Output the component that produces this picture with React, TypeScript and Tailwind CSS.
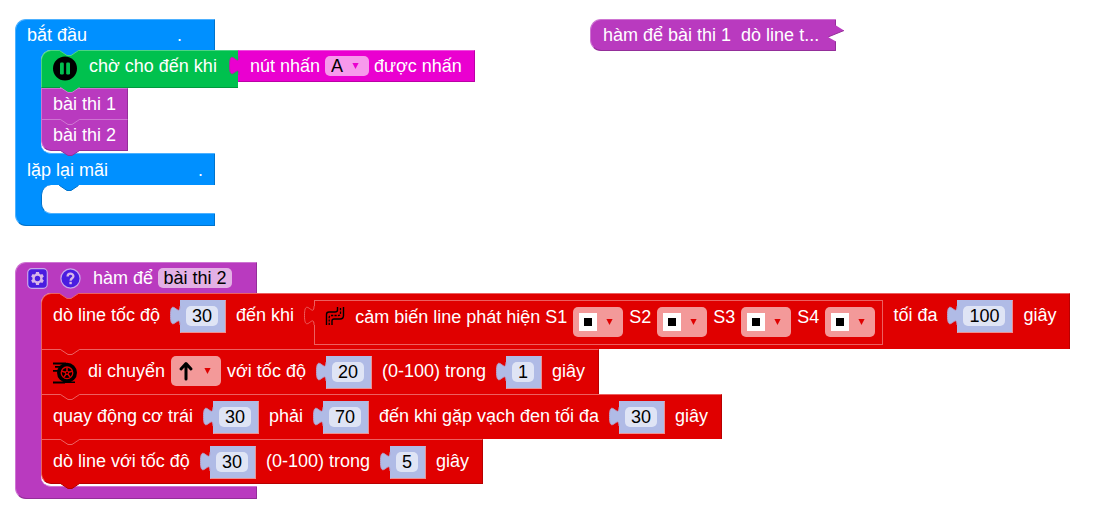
import { useState, type ReactNode } from "react";

function Label({ children, className = "" }: { children: ReactNode; className?: string }) {
  return <span className={`whitespace-pre leading-[20px] ${className}`}>{children}</span>;
}

/* Lower connector of a statement block; it hangs over the block that follows. */
function Connector({ fill, edge, className = "left-[18px]" }: { fill: string; edge: string; className?: string }) {
  return (
    <svg className={`pointer-events-none absolute top-full z-10 ${className}`} width="20" height="7" viewBox="0 0 20 7" aria-hidden="true">
      <path d="M0 0H19.5V.5L12 5.5H8L.5 .5H0Z" fill={fill} />
      <path d="M0 .5H.5L8 5.500H12L19.500 .5" fill="none" stroke={edge} strokeWidth="1" />
    </svg>
  );
}

/* Jigsaw tab on the left of a value block. */
function Plug({ fill, edge }: { fill: string; edge: string }) {
  return (
    <svg className="z-10 -mr-px shrink-0" width="11" height="30" viewBox="0 0 11 30" aria-hidden="true">
      <path d="M11 6.200H10C10 18.700 .5 -3.800 .5 15.500S10 12.400 10 24.900H11Z" fill={fill} />
      <path d="M10 6.200C10 18.700 .5 -3.800 .5 15.500S10 12.400 10 24.900" fill="none" stroke={edge} strokeWidth="1" />
    </svg>
  );
}

function NumberValue({ value, label }: { value: string; label: string }) {
  const [text, setText] = useState(value);
  const width = value.length === 1 ? "w-[22px]" : value.length === 2 ? "w-[32px]" : "w-[42px]";
  return (
    <div className="flex items-start">
      <Plug fill="#b0bbe6" edge="#b5a3cc" />
      <div className="flex h-[33px] border border-t-[#b0bbe6] border-r-[#ee9090] border-b-[#ee9090] border-l-[#b0bbe6] bg-[#b0bbe6] pt-[5px] pr-[7px] pl-[5px]">
        <input
          aria-label={label}
          value={text}
          onChange={(e) => setText(e.target.value)}
          className={`h-[20px] rounded-[5px] bg-[#dfe4f5] p-0 text-center leading-[20px] text-black outline-none ${width}`}
        />
      </div>
    </div>
  );
}

function Caret({ fill, className }: { fill: string; className: string }) {
  return (
    <svg className={`pointer-events-none [grid-area:1/1] ${className}`} width="7" height="6" viewBox="0 0 7 6" aria-hidden="true">
      <path d="M.4 0H6.600L3.500 6Z" fill={fill} />
    </svg>
  );
}

function PictureSelect({ label, options, children }: { label: string; options: string[]; children: ReactNode }) {
  return (
    <div className="grid items-center">
      <select aria-label={label} className="h-[30px] w-[50px] appearance-none rounded-[5px] bg-[#f39999] p-0 text-transparent outline-none [grid-area:1/1]">
        {options.map((o) => (
          <option key={o}>{o}</option>
        ))}
      </select>
      {children}
      <Caret fill="#e00000" className="mr-[10px] justify-self-end" />
    </div>
  );
}

function SensorSelect({ name }: { name: string }) {
  return (
    <PictureSelect label={name} options={["■", "□"]}>
      <svg className="pointer-events-none ml-[6px] [grid-area:1/1]" width="18" height="18" viewBox="0 0 18 18" aria-hidden="true">
        <path d="M0 0H18V18H0Z" fill="#fff" />
        <path d="M5 5H13V13H5Z" fill="#000" />
      </svg>
    </PictureSelect>
  );
}

function RedRow({ children, className = "", last = false }: { children: ReactNode; className?: string; last?: boolean }) {
  return (
    <div className={`relative flex w-max items-start gap-[10px] border border-t-[#ec6060] border-r-[#b80000] border-b-[#b80000] border-l-[#ec6060] bg-[#e00000] pt-[6px] pr-[13px] pl-[11px] ${className}`}>
      {children}
      <Connector fill="#e00000" edge={last ? "#b80000" : "#ec6060"} />
    </div>
  );
}

function PauseIcon() {
  return (
    <svg width="24" height="25" viewBox="0 0 24 25" aria-hidden="true">
      <circle cx="12" cy="12.500" r="12" fill="#000" />
      <rect x="7" y="6.500" width="3.800" height="12" rx="1.200" fill="#00c14e" />
      <rect x="13.200" y="6.500" width="3.800" height="12" rx="1.200" fill="#00c14e" />
    </svg>
  );
}

function WheelIcon() {
  return (
    <svg className="mt-[5px] mr-[1px]" width="24" height="24" viewBox="0 0 24 24" aria-hidden="true">
      <path d="M0 1.500H13V3.500H0ZM2 5H9V6.800H2ZM0 9H6V10.800H0ZM0 20.500H12V22.500H0Z" fill="#000" />
      <circle cx="14" cy="11.800" r="10" fill="#000" />
      <circle cx="14" cy="11.800" r="5.800" fill="none" stroke="#e00000" strokeWidth="1.300" />
      <path d="M14 11.800V6.500M14 11.800L19 10.200M14 11.800L17.100 16.100M14 11.800L10.900 16.100M14 11.800L9 10.200" stroke="#e00000" strokeWidth="1.500" />
      <circle cx="14" cy="11.800" r="2.100" fill="#e00000" />
      <circle cx="14" cy="11.800" r="1" fill="#000" />
      <path d="M10 20.500H22V22H10Z" fill="#000" />
    </svg>
  );
}

function LineIcon() {
  return (
    <svg className="-mt-px" width="20" height="20" viewBox="0 0 20 20" fill="none" stroke="#000" aria-hidden="true">
      <path d="M1.500 19V8.500Q1.500 6 4 6H10Q12.500 6 12.500 4V1M7 19V15Q7 13 9 13H15Q18.500 13 18.500 9.500V1" strokeWidth="1.400" />
      <path d="M4.200 19V11.500Q4.200 9.500 6.200 9.500H13Q15.500 9.500 15.500 7V1" strokeWidth="1.300" strokeDasharray="2.200 1.200" />
    </svg>
  );
}

function StartBlock() {
  return (
    <section className="absolute top-[19px] left-[15px] w-max">
      <div className="relative flex h-[31px] w-[200px] items-center rounded-tl-[11px] border-t border-r border-l border-t-[#4db1ff] border-r-[#0073cc] border-l-[#4db1ff] bg-[#0090ff] pl-[11px]">
        <Label>{"bắt đầu" + " ".repeat(18) + "."}</Label>
        <Connector className="left-[43px]" fill="#0090ff" edge="#4dd484" />
      </div>
      <div className="border-l border-[#4db1ff] bg-[linear-gradient(#0090ff,#0090ff)] bg-[length:40px_100%] bg-no-repeat pl-[25px]">
        <div className="w-[174px] rounded-l-[10px] border-b border-b-[#4db1ff] bg-white pb-[2px]">
          <div className="flex w-max items-start">
            <div className="relative flex h-[38px] items-start gap-[12px] rounded-tl-[10px] border-t border-b border-l border-t-[#4dd484] border-b-[#009a3e] border-l-[#4dd484] bg-[#00c14e] pt-[5px] pl-[11px]">
              <PauseIcon />
              <Label>chờ cho đến khi</Label>
              <div className="-mt-[6px] -mr-px">
                <Plug fill="#ea00d0" edge="#a8309a" />
              </div>
              <Connector fill="#00c14e" edge="#ce75d2" />
            </div>
            <div className="flex h-[32px] items-center gap-[5px] border border-t-[#f04ddf] border-r-[#bb00a6] border-b-[#bb00a6] border-l-[#ea00d0] bg-[#ea00d0] pr-[12px] pl-[11px]">
              <Label>nút nhấn</Label>
              <div className="grid items-center">
                <select aria-label="nút nhấn" className="h-[20px] w-[44px] appearance-none rounded-[5px] bg-[#f799ec] p-0 pl-[6px] leading-[20px] text-black outline-none [grid-area:1/1]">
                  <option>A</option>
                  <option>B</option>
                </select>
                <Caret fill="#ea00d0" className="mr-[10px] justify-self-end" />
              </div>
              <Label>được nhấn</Label>
            </div>
          </div>
          <div className="relative flex h-[31px] w-[87px] items-center border-t border-r border-l border-t-[#ce75d2] border-r-[#942e99] border-l-[#ce75d2] bg-[#b93abf] pl-[11px]">
            <Label>bài thi 1</Label>
            <Connector fill="#b93abf" edge="#ce75d2" />
          </div>
          <div className="relative flex h-[32px] w-[87px] items-center rounded-bl-[10px] border border-t-[#ce75d2] border-r-[#942e99] border-b-[#942e99] border-l-[#ce75d2] bg-[#b93abf] pl-[11px]">
            <Label>bài thi 2</Label>
            <Connector fill="#b93abf" edge="#942e99" />
          </div>
        </div>
      </div>
      <div className="relative flex h-[31px] w-[200px] items-center border-r border-l border-r-[#0073cc] border-l-[#4db1ff] bg-[#0090ff] pl-[11px]">
        <Label>{"lặp lại mãi" + " ".repeat(18) + "."}</Label>
        <Connector className="left-[43px]" fill="#0090ff" edge="#0073cc" />
      </div>
      <div className="w-[200px] border-l border-[#4db1ff] bg-[linear-gradient(#0090ff,#0090ff)] bg-[length:40px_100%] bg-no-repeat pl-[25px]">
        <div className="h-[29px] rounded-l-[10px] border-b border-l border-b-[#4db1ff] border-l-[#0073cc] bg-white" />
      </div>
      <div className="h-[12px] w-[200px] rounded-bl-[11px] border-r border-b border-l border-r-[#0073cc] border-b-[#0073cc] border-l-[#4db1ff] bg-[#0090ff]" />
    </section>
  );
}

function CollapsedBlock() {
  return (
    <section className="absolute top-[19px] left-[590px] flex">
      <div className="flex h-[32px] items-center rounded-l-[11px] border-y border-l border-t-[#ce75d2] border-b-[#942e99] border-l-[#ce75d2] bg-[#b93abf] pr-[9px] pl-[12px]">
        <Label>hàm để bài thi 1  dò line t...</Label>
      </div>
      <svg width="17" height="32" viewBox="0 0 17 32" aria-hidden="true">
        <path d="M0 0H8V6.500L16 11.500L0 18L8 22.500V32H0Z" fill="#b93abf" />
        <path d="M0 .5H8" stroke="#ce75d2" />
        <path d="M7.500 1V6.500M16 11.500L0 18M7.500 22.500V31.500H0" fill="none" stroke="#942e99" />
      </svg>
    </section>
  );
}

function FunctionBlock() {
  const [name, setName] = useState("bài thi 2");
  return (
    <section className="absolute top-[262px] left-[15px] w-max">
      <div className="relative flex h-[31px] w-[242px] items-center rounded-tl-[11px] border-t border-r border-l border-t-[#ce75d2] border-r-[#942e99] border-l-[#ce75d2] bg-[#b93abf] pl-[11px]">
        <button type="button" aria-label="Tùy chỉnh" className="mr-[12px]">
          <svg className="block" width="21" height="21" viewBox="0 0 21 21" aria-hidden="true">
            <rect x=".7" y=".7" width="19.600" height="19.600" rx="4" fill="#4a1ce0" stroke="#c9a5ea" strokeWidth="1.200" />
            <g fill="#d9b5e8">
              <circle cx="10.500" cy="10.500" r="5" />
              <path d="M9 4H12L12.500 7H8.500ZM9 17H12L12.500 14H8.500Z" />
              <path d="M9 4H12L12.500 7H8.500ZM9 17H12L12.500 14H8.500Z" transform="rotate(60 10.500 10.500)" />
              <path d="M9 4H12L12.500 7H8.500ZM9 17H12L12.500 14H8.500Z" transform="rotate(120 10.500 10.500)" />
            </g>
            <circle cx="10.500" cy="10.500" r="2.700" fill="#4a1ce0" />
          </svg>
        </button>
        <button type="button" aria-label="Trợ giúp" className="mr-[12px]">
          <svg className="block" width="21" height="21" viewBox="0 0 21 21" aria-hidden="true">
            <circle cx="10.500" cy="10.500" r="9.600" fill="#4a1ce0" stroke="#c9a5ea" strokeWidth="1.200" />
            <path d="M7.600 8.500C7.600 4.800 13.400 4.800 13.400 8.200C13.400 10.300 10.600 10.200 10.600 12.700" fill="none" stroke="#d9b5e8" strokeWidth="2.300" />
            <path d="M9.400 13.800H11.800V16.200H9.400Z" fill="#d9b5e8" />
          </svg>
        </button>
        <Label className="mr-[5px]">hàm để</Label>
        <input
          aria-label="hàm để"
          value={name}
          onChange={(e) => setName(e.target.value)}
          className="h-[20px] w-[74px] rounded-[5px] bg-[#e3b0e5] p-0 text-center leading-[20px] text-black outline-none"
        />
        <Connector className="left-[43px]" fill="#b93abf" edge="#ec6060" />
      </div>
      <div className="border-l border-[#ce75d2] bg-[linear-gradient(#b93abf,#b93abf)] bg-[length:40px_100%] bg-no-repeat pl-[25px]">
        <div className="w-[216px] rounded-l-[10px] border-b border-b-[#ce75d2] bg-white pb-[2px]">
          <RedRow className="h-[56px] rounded-tl-[10px] border-b-0">
            <Label className="mt-[5px]">dò line tốc độ</Label>
            <NumberValue value="30" label="dò line tốc độ" />
            <Label className="mt-[5px]">đến khi</Label>
            <div className="flex items-start">
              <Plug fill="#e00000" edge="#ec6060" />
              <div className="flex h-[45px] items-start gap-[10px] border border-[#ec6060] pt-[6px] pr-[7px] pl-[10px]">
                <LineIcon />
                <div className="flex items-start gap-[6px]">
                  <Label>cảm biến line phát hiện S1</Label>
                  <SensorSelect name="S1" />
                  <Label>S2</Label>
                  <SensorSelect name="S2" />
                  <Label>S3</Label>
                  <SensorSelect name="S3" />
                  <Label>S4</Label>
                  <SensorSelect name="S4" />
                </div>
              </div>
            </div>
            <Label className="mt-[5px]">tối đa</Label>
            <NumberValue value="100" label="tối đa" />
            <Label className="mt-[5px]">giây</Label>
          </RedRow>
          <RedRow className="h-[45px] border-b-0">
            <WheelIcon />
            <div className="flex items-start gap-[6px]">
              <Label className="mt-[5px]">di chuyển</Label>
              <PictureSelect label="di chuyển" options={["↑", "↓"]}>
                <svg className="pointer-events-none ml-[7px] [grid-area:1/1]" width="16" height="20" viewBox="0 0 16 20" fill="none" stroke="#000" strokeWidth="3" strokeLinecap="round" strokeLinejoin="round" aria-hidden="true">
                  <path d="M8 18V3M3 8L8 2.500L13 8" />
                </svg>
              </PictureSelect>
              <Label className="mt-[5px]">với tốc độ</Label>
            </div>
            <NumberValue value="20" label="với tốc độ" />
            <Label className="mt-[5px]">(0-100) trong</Label>
            <NumberValue value="1" label="trong" />
            <Label className="mt-[5px]">giây</Label>
          </RedRow>
          <RedRow className="h-[45px] border-b-0">
            <Label className="mt-[5px]">quay động cơ trái</Label>
            <NumberValue value="30" label="quay động cơ trái" />
            <Label className="mt-[5px]">phải</Label>
            <NumberValue value="70" label="phải" />
            <Label className="mt-[5px]">đến khi gặp vạch đen tối đa</Label>
            <NumberValue value="30" label="đến khi gặp vạch đen tối đa" />
            <Label className="mt-[5px]">giây</Label>
          </RedRow>
          <RedRow className="h-[45px] rounded-bl-[10px]" last>
            <Label className="mt-[5px]">dò line với tốc độ</Label>
            <NumberValue value="30" label="dò line với tốc độ" />
            <Label className="mt-[5px]">(0-100) trong</Label>
            <NumberValue value="5" label="trong" />
            <Label className="mt-[5px]">giây</Label>
          </RedRow>
        </div>
      </div>
      <div className="h-[12px] w-[242px] rounded-bl-[11px] border-r border-b border-l border-r-[#942e99] border-b-[#942e99] border-l-[#ce75d2] bg-[#b93abf]" />
    </section>
  );
}

export default function App() {
  return (
    <main className="relative min-h-screen overflow-hidden bg-white font-['Liberation_Sans',Arial,sans-serif] text-[18px] text-white">
      <StartBlock />
      <CollapsedBlock />
      <FunctionBlock />
    </main>
  );
}
